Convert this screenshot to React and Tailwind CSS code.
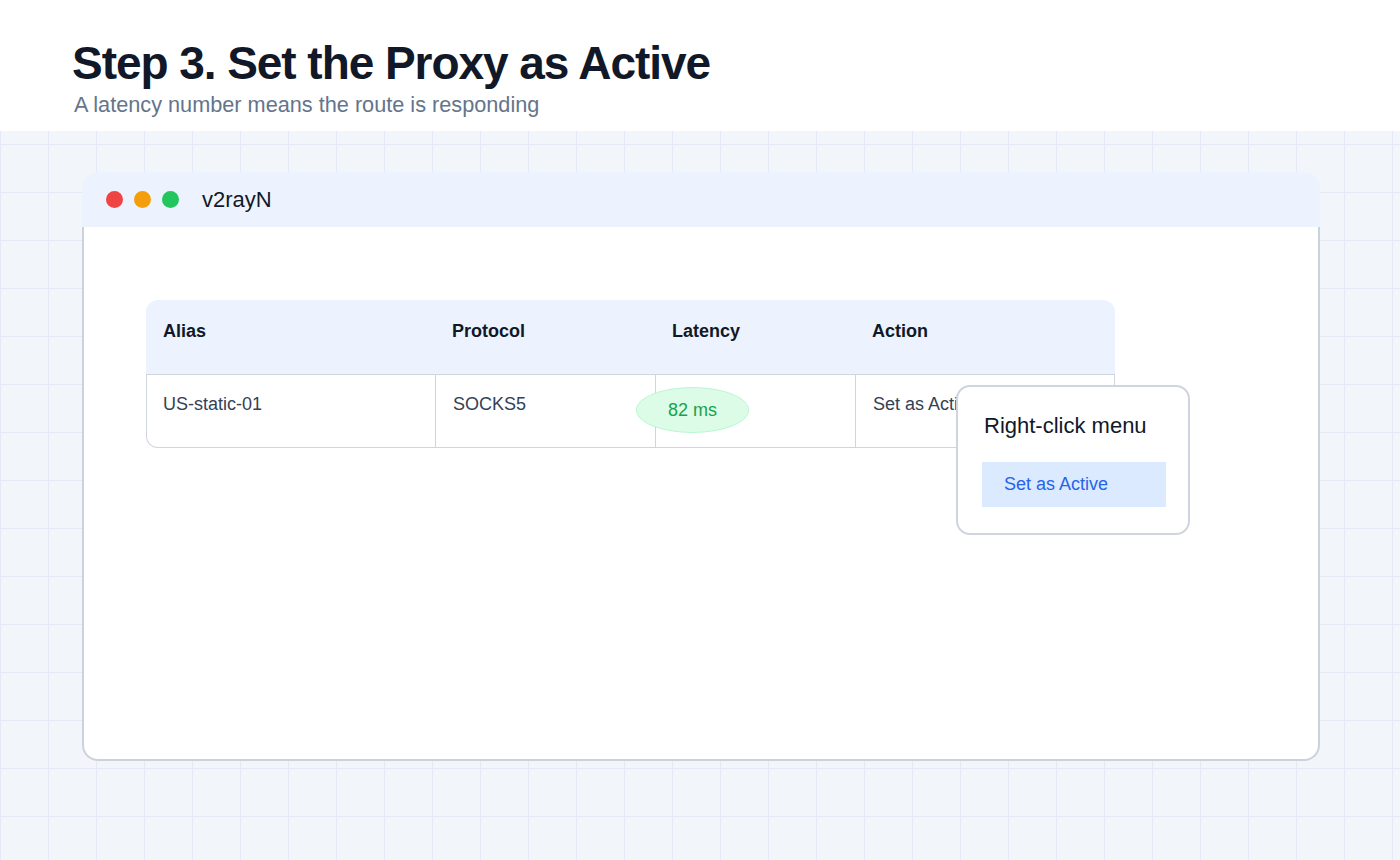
export default function App() {
  const columns = [
    { label: "Alias", value: "US-static-01" },
    { label: "Protocol", value: "SOCKS5" },
    { label: "Latency", value: null },
    { label: "Action", value: "Set as Active" },
  ];

  return (
    <div
      className="h-[860px] w-[1400px] overflow-hidden bg-[#f2f5fa] bg-[linear-gradient(to_right,#e3eaf5_1px,transparent_1px),linear-gradient(to_bottom,#e3eaf5_1px,transparent_1px)] bg-[size:48px_48px]"
      style={{ fontFamily: '"Liberation Sans", Arial, sans-serif' }}
    >
      {/* Heading */}
      <header className="h-[131px] bg-white pl-[72px] pt-[36px]">
        <h1 className="text-[46px] font-bold leading-[54px] tracking-[-1.05px] text-[#111827]">
          Step 3. Set the Proxy as Active
        </h1>
        <p className="pl-[2px] pt-[1px] text-[21.7px] leading-[28px] text-[#64748b]">
          A latency number means the route is responding
        </p>
      </header>

      {/* Window */}
      <div className="ml-[82px] mt-[41px] w-[1238px]">
        <div className="flex h-[55px] items-center rounded-t-2xl bg-[#edf3fe] pl-[24px]">
          <div className="flex gap-[11px]">
            <span className="h-[17px] w-[17px] rounded-full bg-[#ef4444]" />
            <span className="h-[17px] w-[17px] rounded-full bg-[#f59e0b]" />
            <span className="h-[17px] w-[17px] rounded-full bg-[#22c55e]" />
          </div>
          <span className="ml-[23px] text-[22px] text-[#111827]">v2rayN</span>
        </div>

        <div className="h-[534px] rounded-b-2xl border-2 border-t-0 border-[#cbd2dc] bg-white pl-[62px] pt-[73px]">
          <div className="relative w-[969px]">
            {/* Header row */}
            <div className="grid h-[74px] grid-cols-[289px_220px_200px_1fr] rounded-t-xl bg-[#edf3fe]">
              {columns.map((c) => (
                <div
                  key={c.label}
                  className="pl-[17px] pt-[19px] text-[18px] font-bold leading-[24px] text-[#111827]"
                >
                  {c.label}
                </div>
              ))}
            </div>

            {/* Body row */}
            <div className="grid h-[74px] grid-cols-[288px_220px_200px_1fr] rounded-b-xl border-[1.5px] border-t-0 border-[#cfd4dd]">
              <div className="border-t border-[#cfd4dd] pl-[16px] pt-[17px] text-[18px] leading-[24px] text-[#334155]">
                US-static-01
              </div>
              <div className="border-l border-t border-[#cfd4dd] pl-[17px] pt-[17px] text-[18px] leading-[24px] text-[#334155]">
                SOCKS5
              </div>
              <div className="relative border-l border-t border-[#cfd4dd]">
                <span className="absolute left-[-20px] top-[12px] flex h-[46px] w-[113px] items-center justify-center rounded-[50%] border border-[#bbf7d0] bg-[#dcfce7] text-[18px] text-[#16a34a]">
                  82 ms
                </span>
              </div>
              <div className="border-l border-t border-[#cfd4dd] pl-[17px] pt-[17px] text-[18px] leading-[24px] text-[#334155]">
                Set as Active
              </div>
            </div>

            {/* Context menu */}
            <div className="absolute left-[810px] top-[85px] h-[150px] w-[234px] rounded-[14px] border-2 border-[#cfd4df] bg-white pl-[24px] pt-[26px]">
              <div className="pl-[2px] text-[22px] leading-[26px] text-[#111827]">
                Right-click menu
              </div>
              <div className="mt-[23px] flex h-[45px] w-[184px] items-center bg-[#dbeafe] pl-[22px] text-[18px] text-[#2563eb]">
                Set as Active
              </div>
            </div>
          </div>
        </div>
      </div>
    </div>
  );
}
